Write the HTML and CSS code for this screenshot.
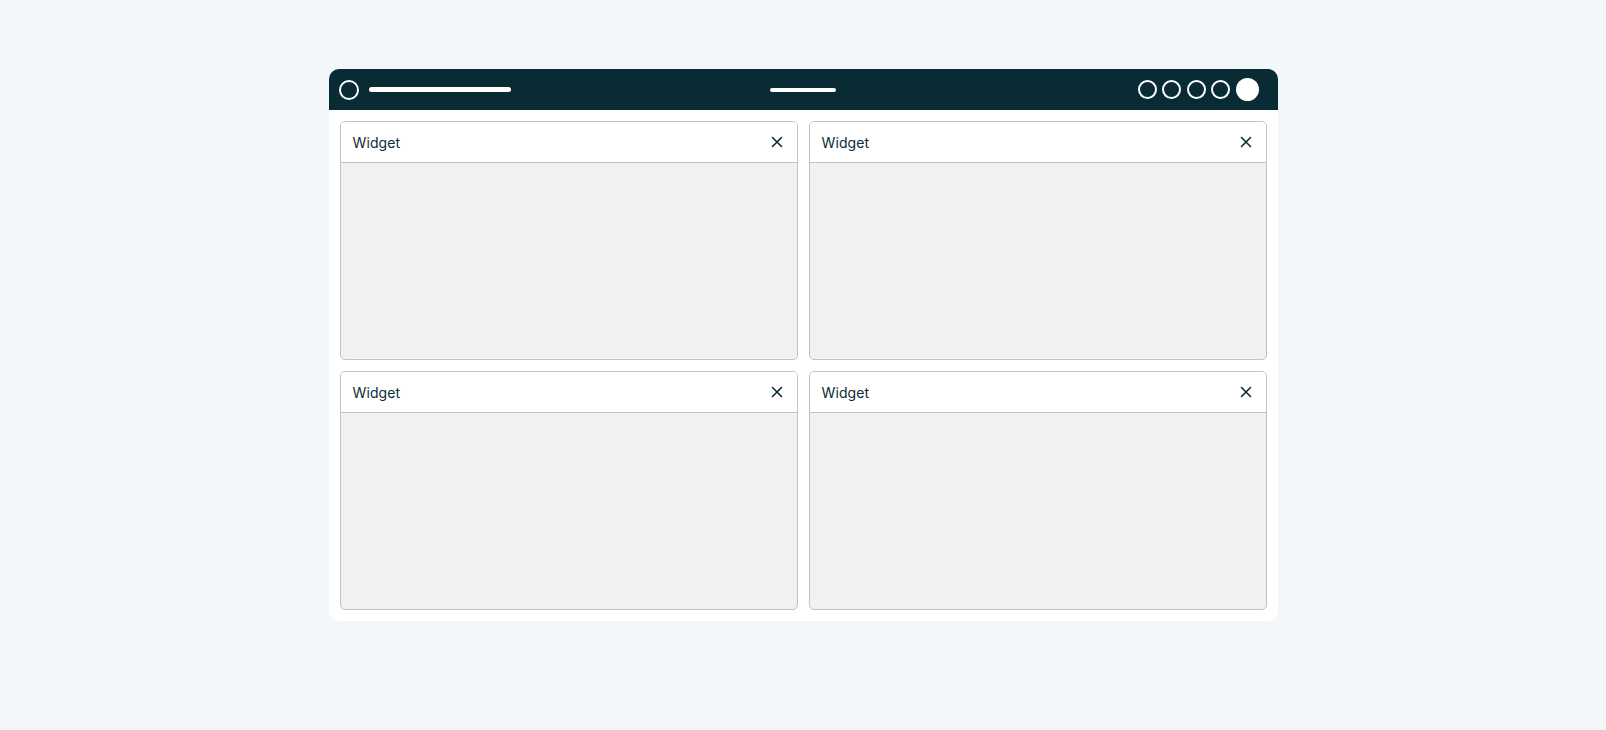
FILE: index.html
```html
<!DOCTYPE html>
<html lang="en">
<head>
<meta charset="utf-8">
<title>Dashboard</title>
<link rel="stylesheet" href="styles.css">
</head>
<body>
  <div class="page">
    <div class="window">
      <header class="topbar">
        <div class="topbar-left">
          <span class="ring"></span>
          <span class="line line-long"></span>
        </div>
        <div class="topbar-center">
          <span class="line line-short"></span>
        </div>
        <div class="topbar-right">
          <span class="ring"></span>
          <span class="ring"></span>
          <span class="ring"></span>
          <span class="ring"></span>
          <span class="dot"></span>
        </div>
      </header>
      <main class="grid">
        <section class="widget">
          <div class="widget-head">
            <span class="widget-title">Widget</span>
            <svg class="close" viewBox="0 0 12 12" width="12" height="12"><path d="M1.5 1.5 10.5 10.5M10.5 1.5 1.5 10.5"/></svg>
          </div>
          <div class="widget-body"></div>
        </section>
        <section class="widget">
          <div class="widget-head">
            <span class="widget-title">Widget</span>
            <svg class="close" viewBox="0 0 12 12" width="12" height="12"><path d="M1.5 1.5 10.5 10.5M10.5 1.5 1.5 10.5"/></svg>
          </div>
          <div class="widget-body"></div>
        </section>
        <section class="widget">
          <div class="widget-head">
            <span class="widget-title">Widget</span>
            <svg class="close" viewBox="0 0 12 12" width="12" height="12"><path d="M1.5 1.5 10.5 10.5M10.5 1.5 1.5 10.5"/></svg>
          </div>
          <div class="widget-body"></div>
        </section>
        <section class="widget">
          <div class="widget-head">
            <span class="widget-title">Widget</span>
            <svg class="close" viewBox="0 0 12 12" width="12" height="12"><path d="M1.5 1.5 10.5 10.5M10.5 1.5 1.5 10.5"/></svg>
          </div>
          <div class="widget-body"></div>
        </section>
      </main>
    </div>
  </div>
</body>
</html>
```

FILE: styles.css
```css
* {
  box-sizing: border-box;
}

html, body {
  margin: 0;
  height: 100%;
}

body {
  background: #f3f7fa;
  font-family: Inter, "Noto Sans", sans-serif;
  color: #0b2a33;
}

.page {
  display: flex;
  justify-content: center;
  padding-top: 69px;
}

.window {
  width: 949px;
  height: 552px;
  background: #ffffff;
  border-radius: 10px;
  overflow: hidden;
  display: flex;
  flex-direction: column;
}

.topbar {
  height: 41px;
  flex: 0 0 41px;
  background: #082b34;
  display: grid;
  grid-template-columns: 1fr auto 1fr;
  align-items: center;
  padding: 0 10px;
}

.topbar-left {
  display: flex;
  align-items: center;
  gap: 10px;
}

.topbar-center {
  display: flex;
  justify-content: center;
}

.topbar-right {
  display: flex;
  align-items: center;
  justify-content: flex-end;
  gap: 5.5px;
  margin-right: 9px;
}

.ring {
  width: 20px;
  height: 20px;
  border: 2px solid #ffffff;
  border-radius: 50%;
  flex: 0 0 auto;
}

.topbar-right .ring {
  width: 19px;
  height: 19px;
}

.dot {
  width: 23px;
  height: 23px;
  border-radius: 50%;
  background: #ffffff;
}

.line {
  display: block;
  height: 5px;
  border-radius: 3px;
  background: #ffffff;
}

.line-long {
  width: 142px;
}

.line-short {
  width: 66px;
  height: 4px;
}

.grid {
  flex: 1;
  display: grid;
  grid-template-columns: 1fr 1fr;
  grid-template-rows: 1fr 1fr;
  gap: 11px;
  padding: 11px;
}

.widget {
  display: flex;
  flex-direction: column;
  border: 1px solid #b9c5c8;
  border-radius: 5px;
  overflow: hidden;
  background: #f1f1f1;
}

.widget-head {
  height: 41px;
  flex: 0 0 41px;
  display: flex;
  align-items: center;
  justify-content: space-between;
  padding: 0 14px 0 12px;
  background: #ffffff;
  border-bottom: 1px solid #b9c5c8;
}

.widget-title {
  font-size: 14px;
  letter-spacing: 0.1px;
  color: #0b2a33;
}

.close {
  display: block;
}

.close path {
  stroke: #0b2a33;
  stroke-width: 1.6;
  stroke-linecap: round;
  fill: none;
}

.widget-body {
  flex: 1;
}
```
